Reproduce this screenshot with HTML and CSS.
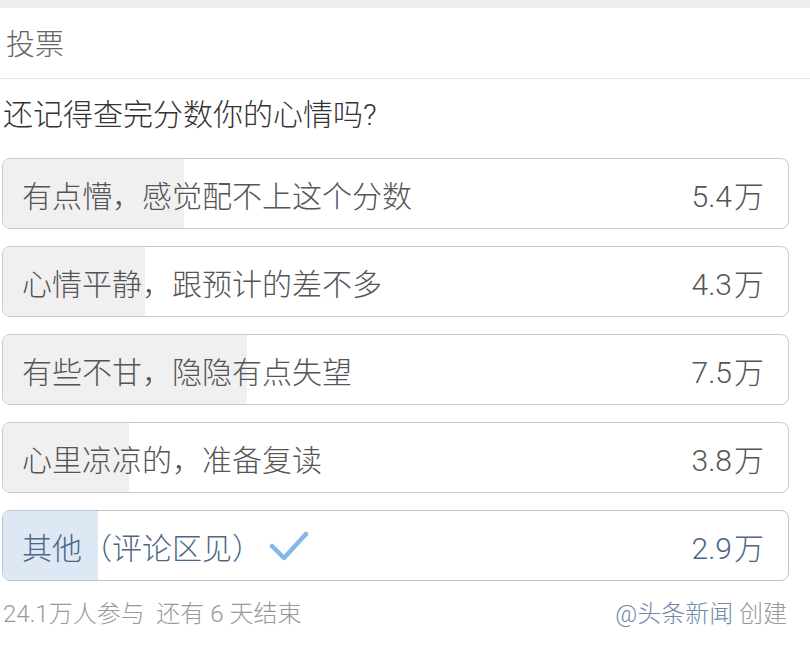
FILE: index.html
```html
<!DOCTYPE html>
<html lang="zh-CN">
<head>
<meta charset="utf-8">
<title>投票</title>
<link rel="stylesheet" href="styles.css">
</head>
<body>
<div class="topbar"></div>
<div class="vote">
  <div class="vote-title">投票</div>
  <div class="question">还记得查完分数你的心情吗?</div>
  <div class="options">
    <div class="option">
      <div class="fill" style="width:181px"></div>
      <span class="label">有点懵，感觉配不上这个分数</span>
      <span class="count">5.4<span class="unit">万</span></span>
    </div>
    <div class="option">
      <div class="fill" style="width:142px"></div>
      <span class="label">心情平静，跟预计的差不多</span>
      <span class="count">4.3<span class="unit">万</span></span>
    </div>
    <div class="option">
      <div class="fill" style="width:244px"></div>
      <span class="label">有些不甘，隐隐有点失望</span>
      <span class="count">7.5<span class="unit">万</span></span>
    </div>
    <div class="option">
      <div class="fill" style="width:126px"></div>
      <span class="label">心里凉凉的，准备复读</span>
      <span class="count">3.8<span class="unit">万</span></span>
    </div>
    <div class="option selected">
      <div class="fill" style="width:95px"></div>
      <span class="label">其他（评论区见）</span>
      <svg class="check" width="44" height="32" viewBox="0 0 44 32"><polyline points="5,15 17,27 39,3" fill="none" stroke="#86b6ea" stroke-width="4.5" stroke-linecap="round" stroke-linejoin="round"/></svg>
      <span class="count">2.9<span class="unit">万</span></span>
    </div>
  </div>
  <div class="footer">
    <span class="meta">24.1万人参与&nbsp;&nbsp;还有 6 天结束</span>
    <span class="creator"><span class="author">@头条新闻</span> 创建</span>
  </div>
</div>
</body>
</html>
```

FILE: styles.css
```css
* { box-sizing: border-box; }
html, body { margin: 0; padding: 0; background: #fff; }
body {
  font-family: "Roboto", "Noto Sans CJK SC", sans-serif;
  font-weight: 300;
  width: 810px;
  height: 648px;
  overflow: hidden;
}
.topbar { height: 8px; background: #efefef; }
.vote-title {
  height: 71px;
  line-height: 74px;
  padding-left: 6px;
  font-size: 29px;
  color: #666;
  border-bottom: 1px solid #e6e6e6;
}
.question {
  padding: 21px 0 0 3px;
  line-height: 30px;
  font-size: 30px;
  color: #333;
}
.options {
  display: flex;
  flex-direction: column;
  gap: 17px;
  margin: 28px 21px 0 2px;
}
.option {
  position: relative;
  height: 71px;
  border: 1px solid #c9c9c9;
  border-radius: 8px;
  display: flex;
  align-items: center;
  padding: 0 24px 0 19px;
  overflow: hidden;
  color: #555;
  font-size: 30px;
}
.fill {
  position: absolute;
  left: 0; top: 0; bottom: 0;
  background: #f0f0f0;
}
.label, .count, .check { position: relative; }
.label { flex: none; }
.count { margin-left: auto; }
.unit { margin-left: 2px; }
.selected { border-color: #b5c7d8; color: #4d6784; }
.selected .fill { background: #dde8f4; }
.check { margin-left: 5px; margin-top: 2px; }
.footer {
  display: flex;
  justify-content: space-between;
  margin: 18px 23px 0 3px;
  font-size: 24px;
  line-height: 30px;
  color: #999;
}
.author { color: #6f8aa7; }
```
